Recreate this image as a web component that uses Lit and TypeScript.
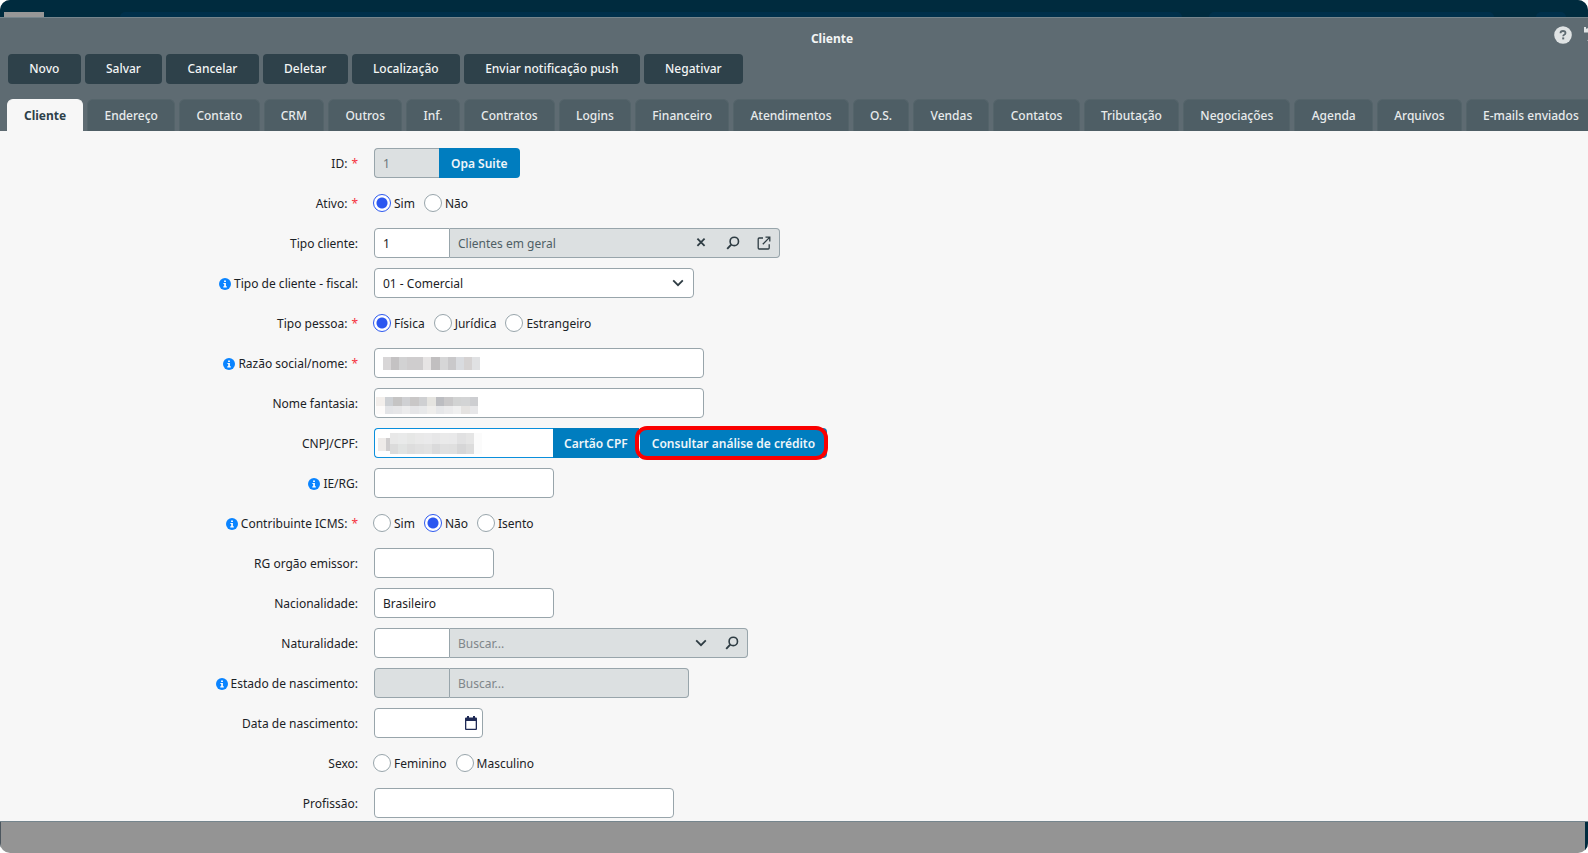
import { LitElement, html, css, svg, nothing, TemplateResult } from "lit";
import { customElement } from "lit/decorators.js";
import { classMap } from "lit/directives/class-map.js";

const ACTIONS = ["Novo", "Salvar", "Cancelar", "Deletar", "Localização", "Enviar notificação push", "Negativar"];

const TABS = [
  "Cliente", "Endereço", "Contato", "CRM", "Outros", "Inf.", "Contratos", "Logins", "Financeiro",
  "Atendimentos", "O.S.", "Vendas", "Contatos", "Tributação", "Negociações", "Agenda", "Arquivos",
  "E-mails enviados",
];

const searchIcon = html`<svg class="icon" width="14" height="14" viewBox="0 0 14 14" aria-hidden="true">
  <circle cx="8.3" cy="5.4" r="4.2" fill="none" stroke="currentColor" stroke-width="1.6" />
  <path d="M5.2 8.6 1.2 12.8" stroke="currentColor" stroke-width="1.9" />
</svg>`;

const closeIcon = html`<svg class="icon" width="14" height="14" viewBox="0 0 14 14" aria-hidden="true">
  <path d="M2.4 2.6l7.2 7.2M9.6 2.6L2.4 9.8" stroke="currentColor" stroke-width="1.8" />
</svg>`;

const chevronIcon = html`<svg class="icon" width="14" height="14" viewBox="0 0 14 14" aria-hidden="true">
  <path d="M2.2 4.4 7 9.2l4.8-4.8" fill="none" stroke="currentColor" stroke-width="1.8" />
</svg>`;

const openIcon = html`<svg class="icon" width="14" height="14" viewBox="0 0 14 14" aria-hidden="true">
  <path d="M6 2H2.2Q1.2 2 1.2 3v9q0 1 1 1h9q1 0 1-1V8.2M8.5 1.2h4.3v4.3M12.6 1.4 5.8 8.2"
    fill="none" stroke="currentColor" stroke-width="1.3" />
</svg>`;

const calendarIcon = html`<svg width="14" height="14" viewBox="0 0 14 14" aria-hidden="true">
  <path d="M3 0h2v1.5h4V0h2v1.5h1q1 0 1 1V13q0 1-1 1H2q-1 0-1-1V2.5q0-1 1-1h1zM2.3 5v7.7h9.4V5z" fill="#1f2a55" fill-rule="evenodd" />
</svg>`;

const infoIcon = html`<svg class="info" width="12" height="12" viewBox="0 0 12 12" aria-hidden="true">
  <circle cx="6" cy="6" r="6" fill="#0a84ff" />
  <path d="M5.1 2.4h1.8v1.5H5.1zM4.4 4.9h2.5v3.3h.9v1.2H4.3V8.2h.9V6h-.8z" fill="#fff" />
</svg>`;

/* Masked personal data: a strip of grey cells, one string of colours per line. */
const mask = (width: number, height: number, cell: number, rows: string[][]) => {
  const h = height / rows.length;
  return html`<svg class="mask" width=${width} height=${height} shape-rendering="crispEdges" aria-hidden="true">
    ${rows.map((row, r) =>
      row.map((c, i) => svg`<rect x=${i * cell} y=${r * h} width=${cell + 0.5} height=${h} fill=${c}></rect>`)
    )}
  </svg>`;
};

const maskRazao = mask(97, 13, 8.08, [
  ["#d8d6d7", "#c4c2c3", "#d2d2d3", "#cfcdce", "#cfcdce", "#e6e4e4", "#c1bfc0", "#d6d6d7", "#c9c8ca", "#d9dbdf", "#d5d2d2", "#e0e1e3"],
]);
const maskFantasia = mask(102, 17, 8.5, [
  ["#f3efec", "#cdd0d4", "#c5c4c4", "#cfd0d3", "#c9c7c7", "#cfd0d2", "#e5e4e0", "#bcbdc1", "#c9c8c9", "#d2d3d3", "#d3d4d5", "#cdced1"],
  ["#fdfbfa", "#e3e4e7", "#e6e6e8", "#ececed", "#e5e5e7", "#e8e9ea", "#efeeec", "#e6e7e9", "#ebebec", "#f0f0f0", "#e5e3e1", "#e7e7e9"],
]);
const maskCpf = html`<svg class="mask" width="104" height="21" shape-rendering="crispEdges" aria-hidden="true">
  <rect y="5" width="8" height="13" fill="#eeebe9"></rect>
  <rect x="8" y="5" width="4" height="13" fill="#cfcdce"></rect>
  ${[
    ["#e8e8e8", "#e9eaea", "#e6e7e6", "#e9e9e9", "#eaeaeb", "#e7e7e8", "#eaeaea", "#e9e9ea", "#e1e1e2", "#e5e5e5", "#fbfbfb"],
    ["#dbdbdb", "#e1e3e2", "#dddddd", "#e0e0e0", "#e2e2e2", "#dadadb", "#e0e0e0", "#dfdfdf", "#d6d6d7", "#dcdcdc", "#fbfbfb"],
  ].map((row, r) =>
    row.map((c, i) => svg`<rect x=${12 + i * 8.4} y=${r * 11} width="8.9" height=${11 - r} fill=${c}></rect>`)
  )}
</svg>`;

interface Row {
  label: string;
  id: string;
  required?: boolean;
  info?: boolean;
  group?: boolean;
  field: TemplateResult;
}

const radios = (name: string, options: string[], selected: string) => html`
  <div class="radios" role="radiogroup" aria-labelledby="${name}-label">
    ${options.map(
      (o) => html`<label class="radio"><input type="radio" name=${name} .checked=${o === selected} /><span class="option">${o}</span></label>`
    )}
  </div>`;

const ROWS: Row[] = [
  {
    label: "ID:", id: "cid", required: true,
    field: html`<input class="box w-id joined" id="cid" value="1" disabled /><button class="blue last" type="button">Opa Suite</button>`,
  },
  { label: "Ativo:", id: "ativo", required: true, group: true, field: radios("ativo", ["Sim", "Não"], "Sim") },
  {
    label: "Tipo cliente:", id: "tipo",
    field: html`<input class="box w-code joined" id="tipo" value="1" />
      <div class="lookup w-330">
        <input class="bare" aria-label="Descrição do tipo cliente" value="Clientes em geral" readonly />
        <button class="tool" type="button" aria-label="Limpar">${closeIcon}</button>
        <button class="tool" type="button" aria-label="Pesquisar">${searchIcon}</button>
        <button class="tool" type="button" aria-label="Abrir">${openIcon}</button>
      </div>`,
  },
  {
    label: "Tipo de cliente - fiscal:", id: "fiscal", info: true,
    field: html`<div class="select w-320"><select class="box" id="fiscal"><option>01 - Comercial</option></select>${chevronIcon}</div>`,
  },
  {
    label: "Tipo pessoa:", id: "pessoa", required: true, group: true,
    field: radios("pessoa", ["Física", "Jurídica", "Estrangeiro"], "Física"),
  },
  {
    label: "Razão social/nome:", id: "razao", required: true, info: true,
    field: html`<div class="masked m9"><input class="box w-330" id="razao" />${maskRazao}</div>`,
  },
  {
    label: "Nome fantasia:", id: "fantasia",
    field: html`<div class="masked m2"><input class="box w-330" id="fantasia" />${maskFantasia}</div>`,
  },
  {
    label: "CNPJ/CPF:", id: "cpf",
    field: html`<div class="masked m4"><input class="box w-179 focus joined" id="cpf" />${maskCpf}</div>
      <button class="blue middle" type="button">Cartão CPF</button>
      <button class="blue last split marked" type="button">Consultar análise de crédito</button>`,
  },
  { label: "IE/RG:", id: "rg", info: true, field: html`<input class="box w-180" id="rg" />` },
  {
    label: "Contribuinte ICMS:", id: "icms", required: true, info: true, group: true,
    field: radios("icms", ["Sim", "Não", "Isento"], "Não"),
  },
  { label: "RG orgão emissor:", id: "emissor", field: html`<input class="box w-120" id="emissor" />` },
  { label: "Nacionalidade:", id: "nac", field: html`<input class="box w-180" id="nac" value="Brasileiro" />` },
  {
    label: "Naturalidade:", id: "nat",
    field: html`<input class="box w-code joined" id="nat" />
      <div class="lookup w-298">
        <input class="bare" aria-label="Buscar naturalidade" placeholder="Buscar..." />
        <button class="tool" type="button" aria-label="Mostrar opções">${chevronIcon}</button>
        <button class="tool" type="button" aria-label="Pesquisar">${searchIcon}</button>
      </div>`,
  },
  {
    label: "Estado de nascimento:", id: "estado", info: true,
    field: html`<input class="box w-code joined" id="estado" disabled />
      <div class="lookup w-239">
        <input class="bare" aria-label="Buscar estado" placeholder="Buscar..." disabled />
      </div>`,
  },
  {
    label: "Data de nascimento:", id: "nasc",
    field: html`<div class="date"><input class="bare" id="nasc" /><button class="tool" type="button" aria-label="Abrir calendário">${calendarIcon}</button></div>`,
  },
  { label: "Sexo:", id: "sexo", group: true, field: radios("sexo", ["Feminino", "Masculino"], "") },
  { label: "Profissão:", id: "prof", field: html`<input class="box w-300" id="prof" />` },
];

@customElement("app-root")
export class AppRoot extends LitElement {
  static styles = css`
    :host {
      display: flex;
      flex-direction: column;
      min-height: 100vh;
      box-sizing: border-box;
      overflow: hidden;
      border-radius: 10px;
      background: #949494;
      font: 12px/16px "Noto Sans", "Open Sans", sans-serif;
      color: #1b2226;
    }
    * { box-sizing: border-box; }
    button, input, select { font: inherit; color: inherit; margin: 0; }
    button { cursor: pointer; }

    .backdrop {
      display: flex;
      align-items: flex-end;
      height: 17px;
      padding-left: 4px;
      background: #002b3e;
      overflow: hidden;
    }
    .logo { width: 40px; height: 5px; background: #979797; }
    .pill { height: 5px; background: #00304b; border-radius: 20px 20px 0 0; }
    .p1 { flex: 1; margin-left: 76px; }
    .p2 { width: 285px; margin-left: 27px; }
    .p3 { width: 30px; margin: 0 22px 0 42px; }

    .head { background: #5e6b72; border-top: 1px solid #76858c; }
    .title-bar { display: flex; align-items: flex-start; height: 36px; }
    .title {
      flex: 1;
      margin: 0;
      padding: 13px 0 0 110px;
      text-align: center;
      font-size: 12px;
      line-height: 16px;
      font-weight: 700;
      color: #f3f5f5;
    }
    .corner { display: flex; gap: 12px; padding-top: 8px; width: 34px; overflow: hidden; }
    .round { flex: none; padding: 0; border: 0; background: none; line-height: 0; height: 18px; }
    .actions { display: flex; gap: 4px; padding: 0 8px; max-width: 751px; }
    .action {
      flex: 1 0 auto;
      height: 30px;
      padding: 0 21px;
      border: 0;
      border-radius: 4px;
      background: #2e414a;
      color: #f3f5f5;
      font-weight: 500;
      white-space: nowrap;
    }
    .tabs { display: flex; gap: 4px; margin-right: -8px; padding: 15px 0 0 7px; }
    .tab {
      flex: 1 0 auto;
      height: 32px;
      padding: 0 16px;
      border: 1px solid #54646a;
      border-bottom: 0;
      border-radius: 6px 6px 0 0;
      background: #4e5e65;
      color: #e8ebec;
      font-weight: 500;
    }
    .tab.active { flex-grow: 0; background: #f7f7f7; border-color: #f7f7f7; color: #2e414a; font-weight: 700; }

    .form {
      display: grid;
      gap: 10px;
      padding: 17px 0 3px;
      background: #f7f7f7;
      border-bottom: 1px solid #75858d;
    }
    .row { display: grid; grid-template-columns: 358px 1fr; column-gap: 16px; height: 30px; align-items: center; }
    .label { display: flex; justify-content: flex-end; align-items: center; padding-top: 2px; }
    .info { margin-right: 3px; }
    .star { color: #f5333f; margin-left: 4px; }
    .field { display: flex; height: 30px; align-items: center; }

    .box {
      height: 30px;
      padding: 0 8px;
      border: 1px solid #98a5ab;
      border-radius: 4px;
      background: #fff;
      outline: 0;
    }
    .box:disabled { background: #dce0e1; color: #6b777c; }
    .joined { border-top-right-radius: 0; border-bottom-right-radius: 0; }
    .w-id { width: 65px; border-right: 0; }
    .w-code { width: 76px; }
    .w-120 { width: 120px; }
    .w-179 { width: 179px; }
    .w-180 { width: 180px; }
    .w-239 { width: 239px; }
    .w-298 { width: 298px; }
    .w-300 { width: 300px; }
    .w-320 { width: 320px; }
    .w-330 { width: 330px; }
    .focus { border-color: #0a8fdc; border-right: 0; }

    .lookup {
      display: flex;
      align-items: center;
      height: 30px;
      border: 1px solid #98a5ab;
      border-left: 0;
      border-radius: 0 4px 4px 0;
      background: #dce0e1;
      color: #4f5f66;
    }
    .bare { flex: 1; min-width: 0; height: 28px; padding: 0 8px; border: 0; outline: 0; background: none; }
    .bare::placeholder { color: #7f868a; }
    .tool {
      display: flex;
      align-items: center;
      justify-content: center;
      width: 31px;
      height: 28px;
      padding: 0;
      border: 0;
      background: none;
      color: #2e3c43;
    }
    .select { display: grid; align-items: center; }
    .select > * { grid-area: 1 / 1; }
    .select select { appearance: none; width: 100%; padding-top: 1px; }
    .select .icon { justify-self: end; margin-right: 9px; pointer-events: none; color: #2e3c43; }
    .date {
      display: flex;
      width: 109px;
      height: 30px;
      border: 1px solid #98a5ab;
      border-radius: 4px;
      background: #fff;
    }
    .date .tool { width: 23px; }

    .masked { display: grid; align-items: center; }
    .masked > * { grid-area: 1 / 1; }
    .mask { pointer-events: none; }
    .m9 .mask { margin-left: 9px; }
    .m2 .mask { margin: 4px 0 0 2px; }
    .m4 .mask { margin-left: 4px; }

    .blue {
      height: 30px;
      padding: 1px 12px 0;
      border: 0;
      background: #007dbf;
      color: #eef5f9;
      font-weight: 600;
      white-space: nowrap;
    }
    .middle { padding: 1px 11px 0; }
    .last { border-radius: 0 4px 4px 0; }
    .split { border-left: 1px solid #f7f7f7; }
    .marked { position: relative; }
    .marked::after {
      content: "";
      position: absolute;
      inset: -2px -1px -2px -5px;
      border: 4px solid #fa0000;
      border-radius: 12px;
    }

    .radios { display: flex; gap: 9px; margin-left: -1px; }
    .radio { display: flex; align-items: center; gap: 3px; }
    .option { padding-top: 1px; }
    .radio input {
      appearance: none;
      width: 18px;
      height: 18px;
      border: 1px solid #98a5ab;
      border-radius: 50%;
      background: #fff;
    }
    .radio input:checked {
      border-color: #2b57f0;
      background: radial-gradient(circle, #2b57f0 5px, #fff 6px);
    }

    .rest { flex: 1; border-left: 1px solid #4c565e; border-right: 3px solid #002b3e; }
  `;

  render() {
    return html`
      <div class="backdrop">
        <div class="logo"></div><div class="pill p1"></div><div class="pill p2"></div><div class="pill p3"></div>
      </div>
      <header class="head">
        <div class="title-bar">
          <h1 class="title">Cliente</h1>
          <div class="corner">
            <button class="round" type="button" aria-label="Ajuda">
              <svg width="18" height="18" viewBox="0 0 18 18">
                <circle cx="9" cy="9" r="8.8" fill="#dfe3e4" />
                <path d="M6.5 7.2q0-2.200 2.500-2.200t2.500 2q0 1.200-1.300 1.800-1 .5-1 1.500" fill="none" stroke="#5e6b72" stroke-width="1.8" />
                <rect x="8.2" y="11.4" width="2" height="2" fill="#5e6b72" />
              </svg>
            </button>
            <button class="round" type="button" aria-label="Histórico">
              <svg width="18" height="18" viewBox="0 0 18 18">
                <path d="M0 1h2v2l1.500-1L6 6.500H0zM3.200 14.500l1.500-1.500 3 2.500-1 1.500z" fill="#dfe3e4" />
                <path d="M3 5a7 7 0 1 1 1.500 9.500" fill="none" stroke="#dfe3e4" stroke-width="2.200" />
              </svg>
            </button>
          </div>
        </div>
        <div class="actions">
          ${ACTIONS.map((a) => html`<button class="action" type="button">${a}</button>`)}
        </div>
        <nav class="tabs" role="tablist">
          ${TABS.map(
            (t, i) => html`<button role="tab" aria-selected=${i === 0} class=${classMap({ tab: true, active: i === 0 })}>${t}</button>`
          )}
        </nav>
      </header>
      <form class="form">
        ${ROWS.map((r) => {
          const text = html`${r.info ? infoIcon : nothing}${r.label}${r.required ? html`<span class="star">*</span>` : nothing}`;
          return html`<div class="row">
            ${r.group
              ? html`<span class="label" id="${r.id}-label">${text}</span>`
              : html`<label class="label" for=${r.id}>${text}</label>`}
            <div class="field">${r.field}</div>
          </div>`;
        })}
      </form>
      <div class="rest"></div>
    `;
  }
}
